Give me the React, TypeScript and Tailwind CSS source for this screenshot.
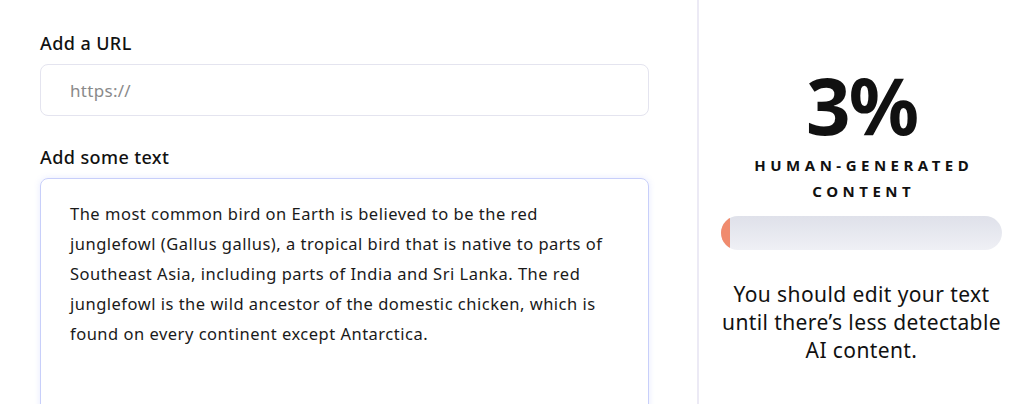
import React from "react";

const sampleLines = [
  "The most common bird on Earth is believed to be the red",
  "junglefowl (Gallus gallus), a tropical bird that is native to parts of",
  "Southeast Asia, including parts of India and Sri Lanka. The red",
  "junglefowl is the wild ancestor of the domestic chicken, which is",
  "found on every continent except Antarctica.",
];

export default function App() {
  const humanScore = 3;

  return (
    <div className="h-[404px] w-[1024px] overflow-hidden bg-white flex font-['Noto_Sans',sans-serif] text-[#111]">
      <main className="w-[697px] shrink-0 pl-10 pr-12 pt-[31px]">
        <label className="block text-[18px] tracking-[0.4px] font-medium leading-6 mb-[9px]">Add a URL</label>
        <input
          type="text"
          placeholder="https://"
          className="w-full h-[52px] rounded-lg border border-[#e4e4ef] px-[29px] text-[17px] tracking-[0.3px] text-[#333] placeholder:text-[#8a8a8a] outline-none"
        />

        <label className="block text-[18px] tracking-[0.4px] font-medium leading-6 mt-[29px] mb-[9px]">Add some text</label>
        <div className="h-[260px] rounded-lg border border-[#c8cffa] shadow-[0_0_6px_rgba(120,140,255,0.18)] pl-[29px] pr-6 pt-[20px]">
          <p className="text-[16.5px] tracking-[0.5px] leading-[30px] text-[#1a1a1a] whitespace-nowrap">
            {sampleLines.map((line) => (
              <span key={line} className="block">
                {line}
              </span>
            ))}
          </p>
        </div>
      </main>

      <aside className="flex-1 border-l-2 border-[#eceaf5] flex flex-col items-center pt-[66px] px-4">
        <div className="text-[78px] font-bold leading-[78px] tracking-tight">{humanScore}%</div>
        <div className="mt-[8px] pl-[0.3em] text-[15px] font-bold tracking-[0.3em] uppercase text-center leading-[26px]">
          Human-Generated
          <br />
          Content
        </div>
        <div className="mt-[12px] w-[281px] h-[34px] rounded-full bg-gradient-to-b from-[#dfe1ea] to-[#eff0f5] overflow-hidden">
          <div className="h-full w-[9px] bg-[#f08b6e]" />
        </div>
        <p className="mt-[30px] text-[21px] tracking-[0.4px] leading-[28px] text-center text-[#111] whitespace-nowrap">
          You should edit your text
          <br />
          until there’s less detectable
          <br />
          AI content.
        </p>
      </aside>
    </div>
  );
}
